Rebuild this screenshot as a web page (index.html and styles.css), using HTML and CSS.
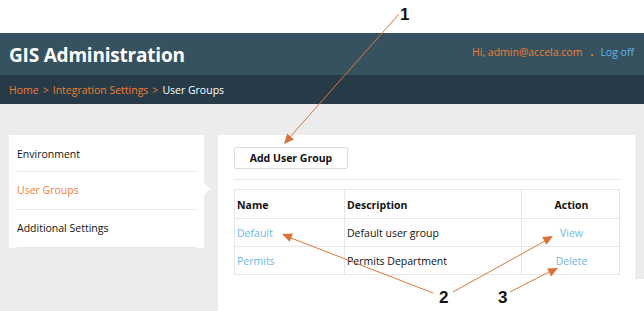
FILE: index.html
```html
<!DOCTYPE html>
<html>
<head>
<meta charset="utf-8">
<link rel="stylesheet" href="styles.css">
</head>
<body>
<div class="page">
  <div class="top-strip"></div>
  <header class="header">
    <h1 class="title">GIS Administration</h1>
    <div class="user">
      <span class="hi">Hi, admin@accela.com</span>
      <span class="sep">.</span>
      <a class="logoff">Log off</a>
    </div>
  </header>
  <nav class="crumbs">
    <a class="crumb">Home</a><span class="chev">&gt;</span><a class="crumb">Integration Settings</a><span class="chev">&gt;</span><span class="crumb-current">User Groups</span>
  </nav>
  <div class="content">
    <aside class="sidebar">
      <div class="side-item">Environment</div>
      <div class="side-item active">User Groups</div>
      <div class="side-item">Additional Settings</div>
      <span class="notch"></span>
    </aside>
    <main class="panel">
      <button class="btn">Add User Group</button>
      <div class="rule"></div>
      <table class="grid">
        <tr><th class="c-name">Name</th><th class="c-desc">Description</th><th class="c-act">Action</th></tr>
        <tr><td><a class="link">Default</a></td><td>Default user group</td><td class="c-act"><a class="link">View</a></td></tr>
        <tr><td><a class="link">Permits</a></td><td>Permits Department</td><td class="c-act"><a class="link">Delete</a></td></tr>
      </table>
    </main>
  </div>
  <div class="note-bg"></div>
  <svg class="notes" width="644" height="311" viewBox="0 0 644 311">
    <g stroke="#d9773a" stroke-width="1" fill="none">
      <line x1="399" y1="14" x2="290" y2="137"/>
      <line x1="433" y1="293" x2="291" y2="238"/>
      <line x1="453" y1="292" x2="545" y2="241"/>
      <line x1="510" y1="292" x2="549" y2="272"/>
    </g>
    <g fill="#d9733a">
      <polygon points="284,144 294,139.5 287.2,133.5"/>
      <polygon points="282,234 292.9,233.4 289.7,241.8"/>
      <polygon points="553,236 546.5,244.8 542.1,237"/>
      <polygon points="558,268 551.1,276.5 547.1,268.5"/>
    </g>
    <g class="num">
      <text x="400" y="20">1</text>
      <text x="439" y="303">2</text>
      <text x="498" y="303">3</text>
    </g>
  </svg>
</div>
</body>
</html>
```
FILE: styles.css
```css
html, body {
  margin: 0;
  padding: 0;
}
body {
  width: 644px;
  height: 311px;
  overflow: hidden;
  background: #ececec;
  font-family: "Open Sans", "Noto Sans", sans-serif;
  font-size: 10.5px;
  color: #111;
}
.page {
  position: relative;
  width: 644px;
  height: 311px;
  overflow: hidden;
}
.top-strip {
  height: 33px;
  background: #fff;
}
.header {
  height: 42px;
  background: #37525f;
  display: flex;
  align-items: center;
  justify-content: space-between;
  padding: 0 10px 0 9px;
}
.title {
  margin: 0;
  font-size: 19px;
  font-weight: 700;
  color: #fff;
  letter-spacing: -0.2px;
  position: relative;
  top: 1px;
}
.user {
  display: flex;
  align-items: baseline;
  font-size: 10.5px;
  position: relative;
  top: -2px;
}
.hi { color: #ee7b38; }
.sep { color: #e6a020; margin: 0 7px 0 8px; font-weight: 700; }
.logoff { color: #62b2e8; }
.crumbs {
  height: 29px;
  background: #263b47;
  display: flex;
  align-items: center;
  padding-left: 9px;
  font-size: 10.5px;
}
.crumb { color: #ee7b38; }
.chev { color: #ee7b38; margin: 0 4px; }
.crumb-current { color: #fff; }
.content {
  display: flex;
  align-items: flex-start;
  gap: 14px;
  padding: 31px 9px 0 9px;
}
.sidebar {
  position: relative;
  width: 195px;
  background: #fff;
  padding: 0 7px 0 8px;
  box-sizing: border-box;
}
.side-item {
  height: 37px;
  line-height: 37px;
  color: #111;
  border-bottom: 1px solid #e8e8e8;
}
.side-item:first-child { height: 36px; line-height: 38px; }
.side-item:last-child { border-bottom: 0; height: 34px; line-height: 38px; }
.side-item.active { color: #f07e3c; }
.notch {
  position: absolute;
  right: -6px;
  top: 48px;
  width: 0;
  height: 0;
  border-top: 6px solid transparent;
  border-bottom: 6px solid transparent;
  border-left: 6px solid #fff;
}
.panel {
  flex: 1;
  height: 200px;
  background: #fff;
  padding: 12px 15px 0 16px;
}
.btn {
  display: block;
  width: 114px;
  height: 22px;
  background: #fff;
  border: 1px solid #dcdcdc;
  border-radius: 2px;
  font-family: "Open Sans", "Noto Sans", sans-serif;
  font-size: 10.5px;
  font-weight: 700;
  color: #111;
  padding: 0;
}
.rule {
  height: 1px;
  background: #e8e8e8;
  margin: 10px 0 9px 0;
}
.grid {
  width: 386px;
  border-collapse: collapse;
}
.grid th, .grid td {
  border: 1px solid #e6e6e6;
  height: 27px;
  padding: 0 0 0 2px;
  text-align: left;
  font-size: 10.5px;
  color: #111;
}
.grid th { font-weight: 700; padding-top: 1px; }
.c-name { width: 107px; }
.c-desc { width: 174px; }
.grid .c-act { text-align: center; }
.link { color: #6cb8e8; }
.note-bg {
  position: absolute;
  left: 420px;
  top: 279px;
  right: 0;
  bottom: 0;
  background: #fff;
}
.notes {
  position: absolute;
  left: 0;
  top: 0;
  pointer-events: none;
}
.num text {
  font-family: "Liberation Sans", Arial, sans-serif;
  font-size: 17px;
  font-weight: 700;
  fill: #111;
}
```
